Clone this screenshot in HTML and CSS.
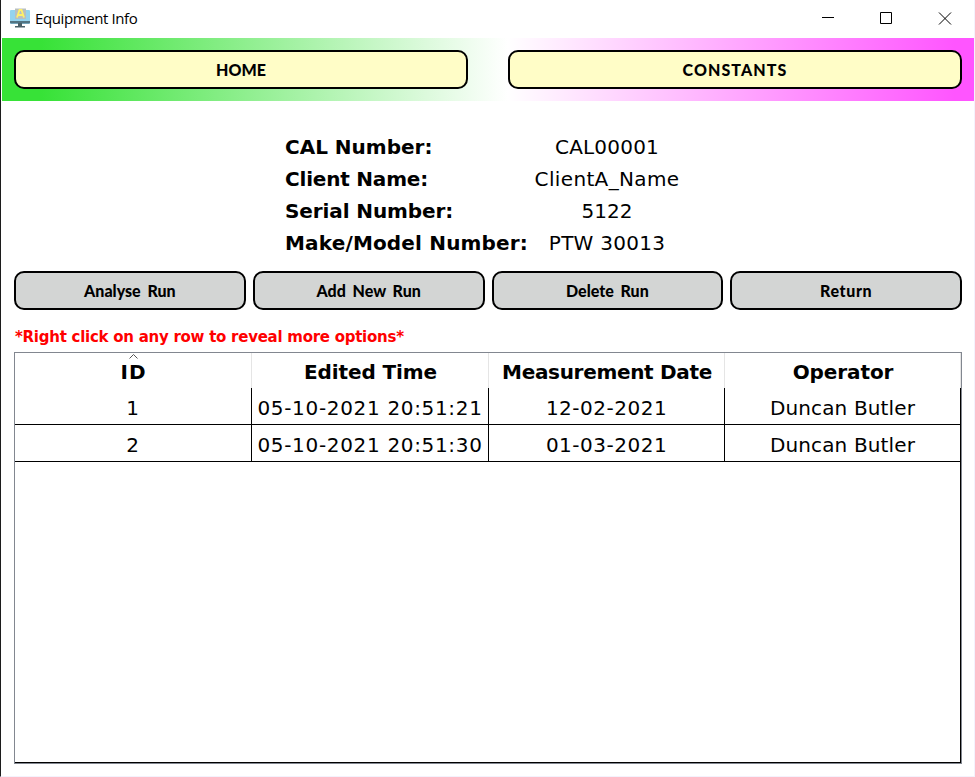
FILE: index.html
```
<!DOCTYPE html>
<html lang="en">
<head>
<meta charset="utf-8">
<title>Equipment Info</title>
<link rel="stylesheet" href="styles.css">
</head>
<body>
<div class="window">
  <header class="titlebar">
    <svg class="app-icon" width="20" height="20" viewBox="0 0 20 20">
      <rect x="0" y="2" width="20" height="14" rx="1" fill="#94d3ee"/>
      <path d="M0 13h20v1.500q0 1-1 1H1q-1 0-1-1z" fill="#527481"/>
      <path d="M8 15h4v3h3v1.500H5V18h3z" fill="#4b6068"/>
      <rect x="5" y="0.500" width="11" height="10.500" fill="#b8bfc0"/>
      <path d="M7 9.500L9.500 2h2L14 9.500M8 7h5" fill="none" stroke="#fff06a" stroke-width="1.800"/>
    </svg>
    <span class="title">Equipment Info</span>
    <svg class="controls" width="132" height="14" viewBox="0 0 132 14" fill="none" stroke="#000" stroke-width="1">
      <path d="M0 6.500h12M58.500 1.500h11v11h-11z"/>
      <path d="M117 1.500l12 12M129 1.500l-12 12"/>
    </svg>
  </header>
  <nav class="band">
    <button class="btn nav-btn">HOME</button>
    <button class="btn nav-btn wide">CONSTANTS</button>
  </nav>
  <dl class="info">
    <dt>CAL Number:</dt><dd class="v1">CAL00001</dd>
    <dt class="k2">Client Name:</dt><dd class="v2">ClientA_Name</dd>
    <dt class="k3">Serial Number:</dt><dd>5122</dd>
    <dt class="k4">Make/Model Number:</dt><dd class="v4">PTW 30013</dd>
  </dl>
  <div class="actions">
    <button class="btn">Analyse Run</button>
    <button class="btn">Add New Run</button>
    <button class="btn">Delete Run</button>
    <button class="btn return">Return</button>
  </div>
  <p class="hint">*Right click on any row to reveal more options*</p>
  <main class="table">
    <div class="row head">
      <div class="cell sorted"><svg class="caret" width="9" height="5" viewBox="0 0 9 5"><path d="M.5 4.500l4-4 4 4" fill="none" stroke="#555"/></svg><span class="h1">ID</span></div>
      <div class="cell"><span class="h2">Edited Time</span></div>
      <div class="cell"><span class="h3">Measurement Date</span></div>
      <div class="cell"><span class="h4">Operator</span></div>
    </div>
    <div class="row"><div class="cell num">1</div><div class="cell time">05-10-2021 20:51:21</div><div class="cell date">12-02-2021</div><div class="cell name">Duncan Butler</div></div>
    <div class="row"><div class="cell num">2</div><div class="cell time">05-10-2021 20:51:30</div><div class="cell date">01-03-2021</div><div class="cell name">Duncan Butler</div></div>
    <div class="empty"></div>
  </main>
</div>
</body>
</html>
```
FILE: styles.css
```
* { box-sizing: border-box; }
body { margin: 0; background: #fff; color: #000; font-family: Verdana, "DejaVu Sans", sans-serif; }
.window { width: 975px; height: 777px; border-left: 1px solid #1c1c1c; border-right: 1px solid #f4f2fc; border-bottom: 1px solid #f4f2fc; padding-left: 1px; display: flex; flex-direction: column; overflow: hidden; }
.titlebar { height: 38px; flex: none; display: flex; align-items: center; padding: 0 20px 2px 8px; }
.title { font: 15px/20px "Segoe UI", "Open Sans", sans-serif; margin-left: 5px; letter-spacing: -.4px; }
.controls { margin-left: auto; }
.band { height: 63px; flex: none; display: flex; gap: 40px; padding: 12px; background: linear-gradient(90deg, #37e237 0%, #37e237 4%, #fff 52%, #ff55ff 98%); }
.btn { flex: 1 1 0; min-width: 0; height: 39px; padding: 1px 0 0; border: 2px solid #000; border-radius: 10px; background: #d3d5d4; color: #000; font: 900 16px/20px "Comic Sans MS", Lato, sans-serif; word-spacing: 3px; }
.nav-btn { background: #fffdc7; }
.wide { letter-spacing: 1.1px; }
.return { letter-spacing: .6px; }
.info { margin: 30px 0 0 283px; display: grid; grid-template-columns: 243px 158px; grid-auto-rows: 32px; font-size: 20px; line-height: 32px; white-space: nowrap; }
dt { font-weight: bold; }
dd { margin: 0; text-align: center; }
.k2 { letter-spacing: -.2px; }
.k3 { letter-spacing: -.1px; }
.k4 { letter-spacing: .17px; }
.v1 { letter-spacing: .2px; }
.v2 { letter-spacing: .35px; }
.v4 { letter-spacing: .25px; }
.actions { display: flex; gap: 7px; margin: 12px 12px 0; }
.hint { margin: 16px 0 0 13px; height: 22px; font-size: 15px; line-height: 22px; font-weight: bold; letter-spacing: -.26px; color: #f00; white-space: nowrap; }
.table { width: 948px; height: 412px; margin: 4px 0 0 12px; border: 1px solid #828790; font-size: 20px; display: flex; flex-direction: column; }
.row { display: grid; grid-template-columns: 237px 237px 236px 236px; height: 37px; flex: none; }
.cell { border-right: 1px solid #000; border-bottom: 1px solid #000; text-align: center; line-height: 40px; white-space: nowrap; overflow: hidden; }
.head { height: 35px; font-weight: bold; }
.head .cell { border-right-color: #e5e5e5; border-bottom: 0; line-height: 38px; padding-left: 1px; }
.h1 { letter-spacing: 1px; }
.h2 { letter-spacing: -.1px; }
.h3 { letter-spacing: -.32px; }
.h4 { letter-spacing: -.1px; }
.num { padding-right: 1px; }
.time { letter-spacing: .67px; }
.date { letter-spacing: .5px; }
.name { letter-spacing: .13px; }
.sorted { position: relative; }
.caret { position: absolute; top: 1px; left: 114px; }
.empty { flex: 1; border-right: 1px solid #000; border-bottom: 1px solid #000; }
```
